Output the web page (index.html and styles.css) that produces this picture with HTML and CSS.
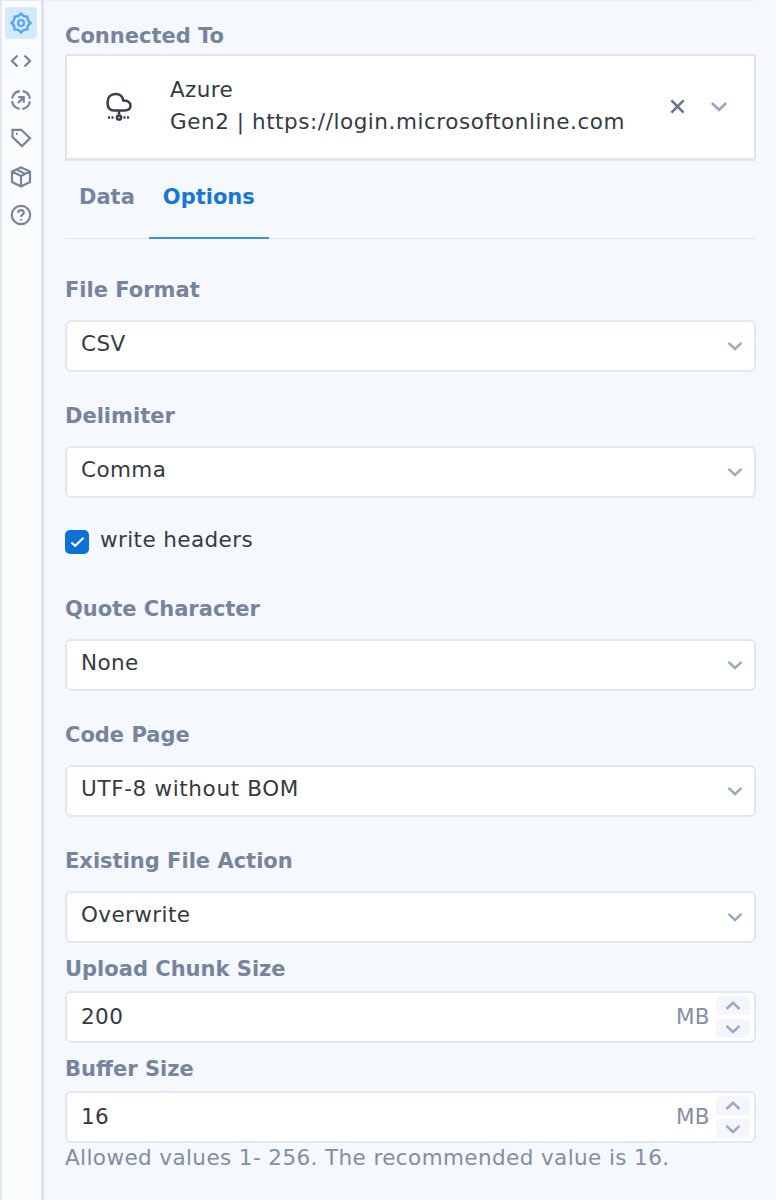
FILE: index.html
```
<!DOCTYPE html>
<html lang="en">
<head>
  <meta charset="UTF-8" />
  <meta name="viewport" content="width=device-width, initial-scale=1.0" />
  <title>Azure Gen2 - Options</title>
  <link rel="stylesheet" href="styles.css">
</head>
<body>
  <!-- shared icons -->
  <svg class="sprite" width="0" height="0">
    <symbol id="chevron" viewBox="0 0 16 10"><path d="M1.5 1.8 8 8l6.5-6.2" /></symbol>
    <symbol id="chevron-up" viewBox="0 0 16 10"><path d="M1.5 8 8 1.8 14.5 8" /></symbol>
  </svg>

  <nav class="sidebar">
    <a class="side-item active">
      <svg viewBox="0 0 22 22"><path d="M11 1.5Q13.500 5 17.500 4.500Q17 8.500 20.500 11Q17 13.500 17.500 17.500Q13.500 17 11 20.500Q8.500 17 4.500 17.500Q5 13.500 1.500 11Q5 8.500 4.500 4.500Q8.500 5 11 1.500z" /><circle cx="11" cy="11" r="3" /></svg>
    </a>
    <a class="side-item">
      <svg viewBox="0 0 22 22"><path d="M7.5 5.5 2 11l5.500 5.500M14.500 5.500 20 11l-5.500 5.500" /></svg>
    </a>
    <a class="side-item">
      <svg viewBox="0 0 22 22"><circle cx="11" cy="11" r="9" stroke-dasharray="11.3 2.837" stroke-dashoffset="-1.4" /><path d="M8 14l5.500-5.500M8.200 8.200h5.500v5.600" /></svg>
    </a>
    <a class="side-item">
      <svg viewBox="0 0 22 22"><path d="M2.500 2.800h8.800l8.700 8.400-8 7.900-9.500-9z" /><path d="M6 6.800h1.600" /></svg>
    </a>
    <a class="side-item">
      <svg viewBox="0 0 22 22"><path d="M11 1.500 20 5.500v10.500L11 20.500 2 16V5.500zM2 5.500l9 4.500 9-4.500M11 10v10.500M6.500 3.500l9 4.500" /></svg>
    </a>
    <a class="side-item">
      <svg viewBox="0 0 22 22"><circle cx="11" cy="11" r="9.200" /><path d="M8.200 8.700c.1-3.500 5.700-3.300 5.600.1 0 2-2.800 1.900-2.800 4M11 15v1.600" /></svg>
    </a>
  </nav>

  <main class="panel">
    <div class="label">Connected To</div>
    <div class="connection">
      <svg class="cloud" viewBox="0 0 26 30"><path d="M8 18.500C3.500 18.500 1.500 15 1.500 10.500 1.500 5 5 2 9.500 2c4.300 0 7.200 2.500 7.800 6.500 4-.2 7.200 1.800 7.200 5 0 3.500-2.800 5-6 5zM13 18.500v4" /><circle cx="13" cy="25.500" r="2.100" /><path class="dots" d="M2 25.500h7M17.500 25.500h7" /></svg>
      <div class="connection-name">
        <div>Azure</div>
        <div class="url">Gen2 | https://login.microsoftonline.com</div>
      </div>
      <svg class="clear" viewBox="0 0 16 16"><path d="M1.500 1.500l13 13M14.500 1.500l-13 13" /></svg>
      <svg class="chevron"><use href="#chevron" /></svg>
    </div>

    <div class="tabs">
      <div class="tab">Data</div>
      <div class="tab active">Options</div>
    </div>

    <div class="field">
      <div class="label">File Format</div>
      <div class="select"><span>CSV</span><svg class="chevron"><use href="#chevron" /></svg></div>
    </div>
    <div class="field">
      <div class="label">Delimiter</div>
      <div class="select"><span>Comma</span><svg class="chevron"><use href="#chevron" /></svg></div>
    </div>
    <div class="check">
      <span class="box"><svg viewBox="0 0 16 12"><path d="M1.500 6.500 5.500 10 14.500 1.500" /></svg></span>
      <span>write headers</span>
    </div>
    <div class="field">
      <div class="label">Quote Character</div>
      <div class="select"><span>None</span><svg class="chevron"><use href="#chevron" /></svg></div>
    </div>
    <div class="field">
      <div class="label">Code Page</div>
      <div class="select"><span class="utf">UTF-8 without BOM</span><svg class="chevron"><use href="#chevron" /></svg></div>
    </div>
    <div class="field">
      <div class="label">Existing File Action</div>
      <div class="select"><span>Overwrite</span><svg class="chevron"><use href="#chevron" /></svg></div>
    </div>

    <div class="number-field">
      <div class="label">Upload Chunk Size</div>
      <div class="number">
        <span>200</span>
        <span class="unit">MB</span>
        <div class="spinner">
          <b><svg class="chevron"><use href="#chevron-up" /></svg></b>
          <b><svg class="chevron"><use href="#chevron" /></svg></b>
        </div>
      </div>
    </div>
    <div class="number-field">
      <div class="label">Buffer Size</div>
      <div class="number">
        <span>16</span>
        <span class="unit">MB</span>
        <div class="spinner">
          <b><svg class="chevron"><use href="#chevron-up" /></svg></b>
          <b><svg class="chevron"><use href="#chevron" /></svg></b>
        </div>
      </div>
    </div>
    <div class="hint">Allowed values 1- 256. The recommended value is 16.</div>
  </main>
</body>
</html>
```
FILE: styles.css
```
* {
  box-sizing: border-box;
}
body {
  margin: 0;
  height: 1200px;
  display: flex;
  overflow: hidden;
  background: #f5f8fd;
  color: #363a43;
  font-family: "DejaVu Sans", Verdana, sans-serif;
  font-size: 21.5px;
  line-height: 32px;
  letter-spacing: 0.4px;
  white-space: nowrap;
}
svg {
  fill: none;
  stroke: currentColor;
  stroke-width: 2.2;
  flex: none;
}
.sprite {
  position: absolute;
}
.sidebar {
  width: 44px;
  flex: none;
  padding: 6px 2px 0 0;
  background: #fafcfe;
  border-top: 1px solid #e4e9f3;
  border-left: 2px solid #e4eaf5;
  border-right: 3px solid #dce4f1;
  color: #76849e;
  display: flex;
  flex-direction: column;
  align-items: center;
  gap: 7px;
}
.side-item {
  width: 32px;
  height: 31.5px;
  border-radius: 4px;
  display: flex;
  align-items: center;
  justify-content: center;
}
.side-item svg {
  width: 22px;
  height: 22px;
}
.side-item.active {
  background: #d5e9fc;
  color: #52a5fa;
}
.panel {
  width: 712px;
  padding: 19px 0 0 21px;
  border-top: 1px solid #edf1f8;
}
.label,
.tab {
  color: #77849d;
  font-size: 21px;
  font-weight: bold;
  letter-spacing: 0;
}
.label {
  height: 34px;
}
.connection {
  height: 107px;
  background: #fff;
  border: 2px solid #e3e5e8;
  border-bottom-width: 3px;
  display: flex;
  align-items: center;
}
.cloud {
  width: 26px;
  height: 30px;
  margin-left: 39px;
  color: #363c49;
  stroke-width: 2.5;
}
.cloud .dots {
  stroke-dasharray: 2 1.5;
}
.connection-name {
  width: 466px;
  margin: -2px 0 0 38px;
}
.url {
  letter-spacing: 0.55px;
}
.clear {
  width: 15px;
  height: 15px;
  margin: -1px 0 0 34px;
  color: #65728e;
  stroke-width: 2.6;
}
.chevron {
  width: 16px;
  height: 10px;
  color: #98aac8;
  stroke-width: 2.5;
}
.connection .chevron {
  width: 18px;
  height: 11px;
  margin: -1px 0 0 25px;
}
.tabs {
  height: 78px;
  margin-bottom: 8px;
  display: flex;
  border-bottom: 1px solid #e0e6f0;
}
.tab {
  height: 78px;
  padding: 20px 14px 0;
}
.tab.active {
  color: #1877d2;
  border-bottom: 2px solid #3c91df;
}
.field {
  height: 126px;
  padding-top: 27px;
}
.field .label {
  height: 46px;
}
.select,
.number {
  height: 52px;
  padding: 0 11px 0 14px;
  background: #fff;
  border: 2px solid #e1e8f4;
  border-radius: 6px;
  display: flex;
  align-items: center;
  justify-content: space-between;
}
.select span {
  margin-top: -4px;
}
.utf {
  letter-spacing: 0.65px;
}
.check {
  height: 67px;
  padding-top: 25px;
  display: flex;
}
.box {
  width: 24px;
  height: 24px;
  margin: 6px 11px 0 0;
  background: #0c72d4;
  border-radius: 5px;
  color: #fff;
  display: flex;
  align-items: center;
  justify-content: center;
}
.box svg {
  width: 15px;
  height: 12px;
}
.number-field {
  height: 100px;
  padding-top: 10px;
}
.number-field .label {
  height: 37px;
  line-height: 30px;
}
.number {
  padding-right: 4px;
}
.number > span {
  margin-top: -1px;
}
.number .unit {
  margin-left: auto;
  color: #858fa3;
}
.spinner {
  width: 34px;
  margin-left: 6px;
  display: flex;
  flex-direction: column;
  gap: 4px;
}
.spinner b {
  height: 19px;
  background: #f4f6fb;
  border-radius: 5px 5px 0 0;
  display: flex;
  align-items: center;
  justify-content: center;
}
.spinner b:last-child {
  border-radius: 0 0 5px 5px;
}
.hint {
  margin-top: -2px;
  color: #828ea4;
}
```
